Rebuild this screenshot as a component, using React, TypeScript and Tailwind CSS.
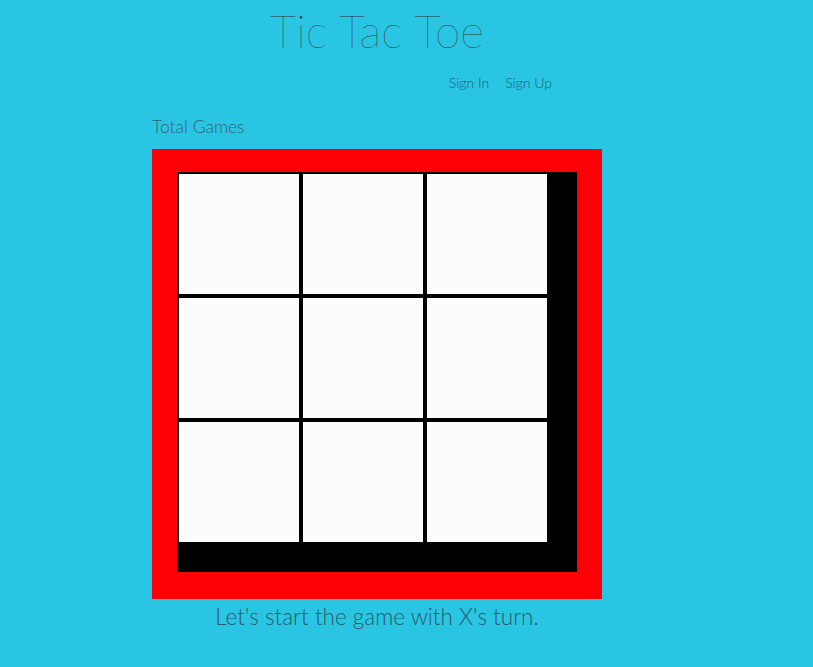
import React, { useState } from "react";

const font = { fontFamily: "Lato, 'Noto Sans', sans-serif" };

const App = () => {
  const [cells] = useState<string[]>(Array(9).fill(""));

  return (
    <div
      className="min-h-[667px] w-full bg-[#29c5e3] font-light"
      style={font}
    >
      <div className="ml-[152px] flex w-[450px] flex-col">
        <h1 className="pt-[3px] text-center text-[46px] font-thin leading-[56px] text-[#333333]">
          Tic Tac Toe
        </h1>
        <nav className="mt-[14px] flex justify-end gap-[16px] pr-[50px] text-[14px] leading-[20px] text-[#1b5f78]">
          <a href="#">Sign In</a>
          <a href="#">Sign Up</a>
        </nav>
        <p className="mt-[22px] text-[17.5px] leading-[24px] text-[#2d6676]">
          Total Games
        </p>
        <div className="mt-[10px] h-[450px] w-[450px] bg-[#fc0006] pl-[25px] pt-[23px]">
          <div className="h-[400px] w-[400px] bg-black">
            <div className="grid w-[372px] grid-cols-3">
              {cells.map((c, i) => (
                <div
                  key={i}
                  className="h-[124px] w-[124px] border-2 border-black bg-[#fcfcfc]"
                >
                  {c}
                </div>
              ))}
            </div>
          </div>
        </div>
        <p className="mt-[2px] text-center text-[22.5px] leading-[32px] text-[#2b5b6b]">
          Let's start the game with X's turn.
        </p>
      </div>
    </div>
  );
};

export default App;
